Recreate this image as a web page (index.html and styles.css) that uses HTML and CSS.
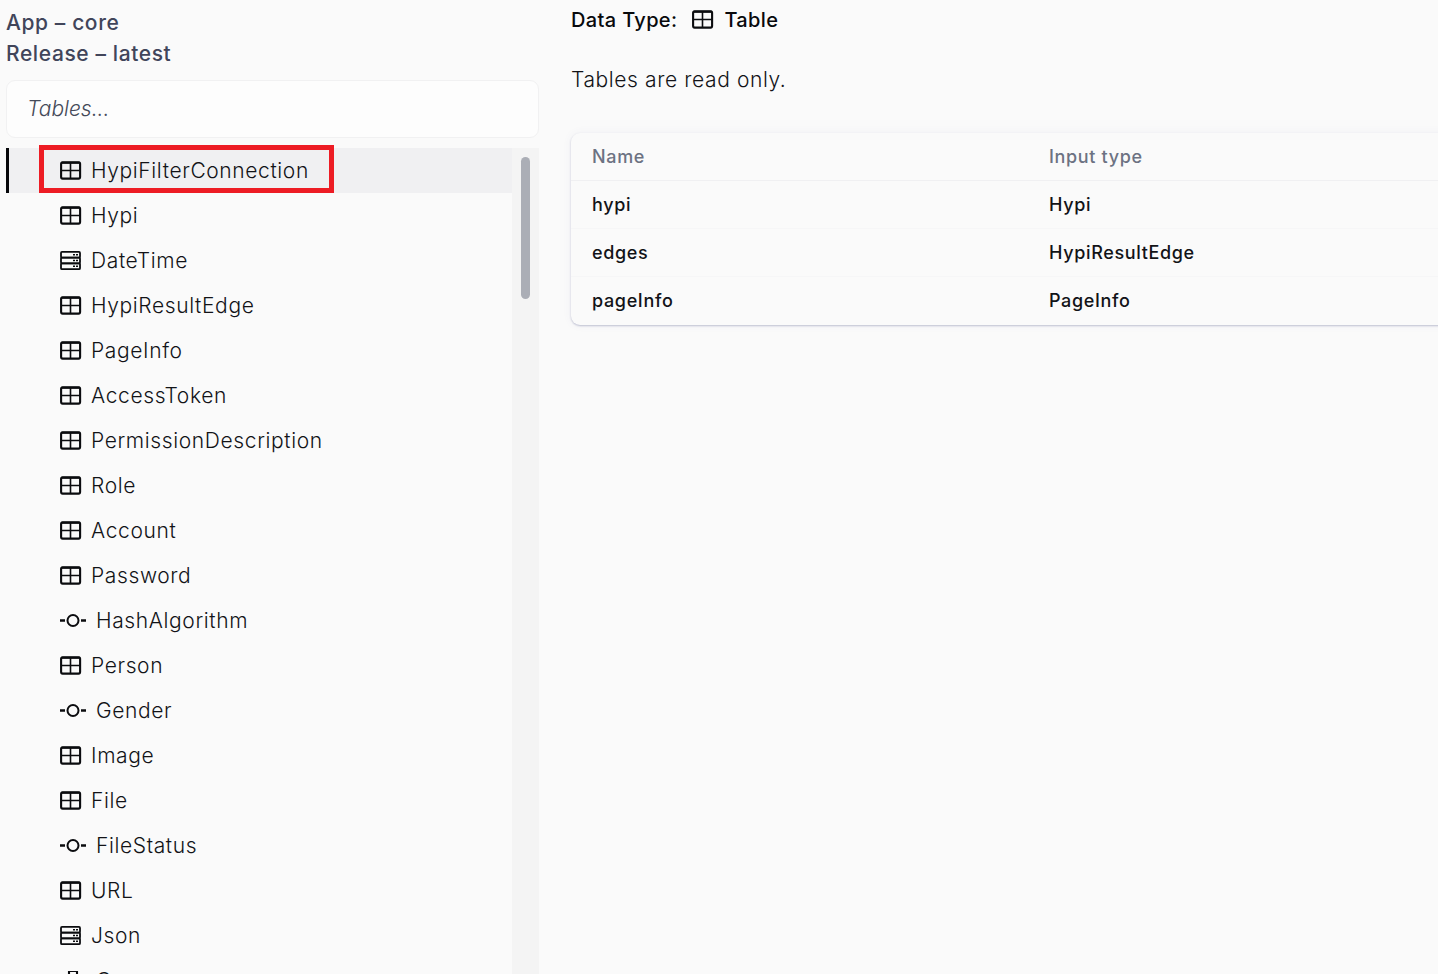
FILE: index.html
```
<!DOCTYPE html>
<html lang="en">
<head>
<meta charset="utf-8">
<title>Data types</title>
<link rel="stylesheet" href="styles.css">
</head>
<body>
<svg class="defs" width="0" height="0">
  <symbol id="table" viewBox="0 0 22 20">
    <path class="line" d="M2.600 1.200h16a1.500 1.500 0 0 1 1.500 1.500v13.400a1.500 1.500 0 0 1-1.500 1.500h-16a1.500 1.500 0 0 1-1.500-1.500V2.700A1.500 1.500 0 0 1 2.600 1.200z"/>
    <path class="line" d="M1.500 1.800h18.500"/>
    <path class="thin" d="M10.500 2v15.500M1.500 9.500h18.500"/>
  </symbol>
  <symbol id="scalar" viewBox="0 0 22 20">
    <rect class="row" x="1" y="0.900" width="19" height="5.700" rx="1"/>
    <rect class="row" x="1" y="6.600" width="19" height="5.700" rx="1"/>
    <rect class="row" x="1" y="12.300" width="19" height="5.900" rx="1"/>
    <path class="dots" d="M13 3.700h2M16 3.700h2M13 9.500h2M16 9.500h2M13 15.300h2M16 15.300h2"/>
  </symbol>
  <symbol id="enum" viewBox="0 0 27 20">
    <circle class="ring" cx="13" cy="9.500" r="5.500"/>
    <path class="dash" d="M0 9.500h5M21 9.500h5"/>
  </symbol>
  <symbol id="union" viewBox="0 0 27 20">
    <path class="line" d="M9 0h8v6H9zM13 6v8M4 18v-4h18v4"/>
  </symbol>
</svg>
<div class="app">
  <aside class="sidebar">
    <div class="heading">App – core</div>
    <div class="heading">Release – latest</div>
    <input class="search" type="text" placeholder="Tables...">
    <div class="browser">
      <ul class="list">
        <li class="item active"><svg class="icon"><use href="#table"/></svg><span>HypiFilterConnection</span><i class="marker"></i></li>
        <li class="item"><svg class="icon"><use href="#table"/></svg><span>Hypi</span></li>
        <li class="item"><svg class="icon"><use href="#scalar"/></svg><span>DateTime</span></li>
        <li class="item"><svg class="icon"><use href="#table"/></svg><span>HypiResultEdge</span></li>
        <li class="item"><svg class="icon"><use href="#table"/></svg><span>PageInfo</span></li>
        <li class="item"><svg class="icon"><use href="#table"/></svg><span>AccessToken</span></li>
        <li class="item"><svg class="icon"><use href="#table"/></svg><span>PermissionDescription</span></li>
        <li class="item"><svg class="icon"><use href="#table"/></svg><span>Role</span></li>
        <li class="item"><svg class="icon"><use href="#table"/></svg><span>Account</span></li>
        <li class="item"><svg class="icon"><use href="#table"/></svg><span>Password</span></li>
        <li class="item"><svg class="icon wide"><use href="#enum"/></svg><span>HashAlgorithm</span></li>
        <li class="item"><svg class="icon"><use href="#table"/></svg><span>Person</span></li>
        <li class="item"><svg class="icon wide"><use href="#enum"/></svg><span>Gender</span></li>
        <li class="item"><svg class="icon"><use href="#table"/></svg><span>Image</span></li>
        <li class="item"><svg class="icon"><use href="#table"/></svg><span>File</span></li>
        <li class="item"><svg class="icon wide"><use href="#enum"/></svg><span>FileStatus</span></li>
        <li class="item"><svg class="icon"><use href="#table"/></svg><span>URL</span></li>
        <li class="item"><svg class="icon"><use href="#scalar"/></svg><span>Json</span></li>
        <li class="item"><svg class="icon wide union"><use href="#union"/></svg><span>Group</span></li>
      </ul>
      <div class="track"><div class="thumb"></div></div>
    </div>
  </aside>
  <main class="content">
    <h1 class="title"><span>Data Type:</span><svg class="icon"><use href="#table"/></svg><span>Table</span></h1>
    <p class="note">Tables are read only.</p>
    <div class="card">
      <div class="row-line head"><span>Name</span><span>Input type</span></div>
      <div class="row-line"><span>hypi</span><span>Hypi</span></div>
      <div class="row-line"><span>edges</span><span>HypiResultEdge</span></div>
      <div class="row-line"><span>pageInfo</span><span>PageInfo</span></div>
    </div>
  </main>
</div>
</body>
</html>
```
FILE: styles.css
```
* { box-sizing: border-box; }
body {
  margin: 0;
  height: 974px;
  overflow: hidden;
  background: #fafafa;
  color: #121317;
  font-family: Inter, sans-serif;
}
.defs { display: block; height: 0; }
.line { fill: none; stroke: #0b0c0f; stroke-width: 2.1; }
.thin { fill: none; stroke: #0b0c0f; stroke-width: 1.6; }
.row { fill: none; stroke: #0b0c0f; stroke-width: 1.8; }
.dots { fill: none; stroke: #0b0c0f; stroke-width: 1.6; }
.ring { fill: none; stroke: #0b0c0f; stroke-width: 2; }
.dash { fill: none; stroke: #0b0c0f; stroke-width: 2.6; }
.app { display: flex; height: 974px; overflow: hidden; }
.sidebar { flex: none; width: 539px; padding: 7px 0 0 6px; }
.heading {
  height: 31px;
  line-height: 31px;
  font-size: 21px;
  font-weight: 500;
  letter-spacing: 0.6px;
  color: #41455a;
}
.search {
  display: block;
  width: 533px;
  height: 58px;
  margin-top: 11px;
  padding: 0 20px 1px;
  border: 1px solid #f1f1f2;
  border-radius: 9px;
  background: #fdfdfd;
  font: italic 300 21px Inter, sans-serif;
}
.search::placeholder { color: #454a59; opacity: 1; }
.browser { display: flex; height: 826px; margin-top: 10px; }
.list { flex: 1; margin: 0; padding: 0; list-style: none; }
.item {
  position: relative;
  display: flex;
  align-items: center;
  gap: 9px;
  height: 45px;
  padding-left: 54px;
  font-size: 21px;
  font-weight: 300;
  letter-spacing: 0.62px;
}
.item.active { padding-left: 51px; border-left: 3px solid #07080b; background: #f0f0f2; }
.marker {
  position: absolute;
  left: 30px;
  top: -3px;
  width: 295px;
  height: 48px;
  border: 5px solid #ed1c24;
}
.icon { flex: none; width: 22px; height: 20px; }
.icon.wide { width: 27px; }
.icon.union { overflow: visible; }
.track { flex: none; width: 27px; padding: 9px 9px 0; background: #f4f4f4; }
.thumb { width: 9px; height: 142px; border-radius: 5px; background: #abaeb6; }
.content { flex: 1; min-width: 0; padding: 4px 0 0 32px; overflow: hidden; }
.title {
  display: flex;
  align-items: center;
  height: 32px;
  margin: 0;
  font-size: 20px;
  font-weight: 500;
  letter-spacing: 0.35px;
  color: #08090c;
}
.title .icon { margin: 0 10px 0 15px; }
.note {
  height: 32px;
  margin: 28px 0 0;
  line-height: 32px;
  font-size: 21px;
  font-weight: 300;
  letter-spacing: 0.6px;
}
.card {
  width: 920px;
  margin-top: 37px;
  border-radius: 9px;
  box-shadow: 0 1px 2px rgba(45, 55, 110, 0.28), 0 0 10px rgba(80, 90, 150, 0.06);
  background: #fafafa;
}
.row-line {
  display: grid;
  grid-template-columns: 457px 1fr;
  align-items: center;
  height: 48px;
  padding-left: 21px;
  border-bottom: 1px solid #f6f6f7;
  font-size: 18px;
  font-weight: 500;
  letter-spacing: 0.65px;
}
.row-line.head { color: #6c7282; border-bottom-color: #f0f0f2; }
.row-line:last-child { border-bottom-color: transparent; }
```
